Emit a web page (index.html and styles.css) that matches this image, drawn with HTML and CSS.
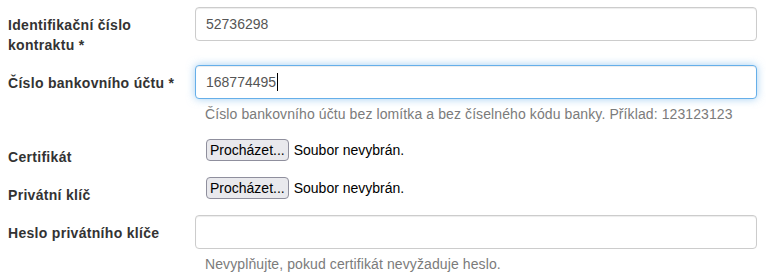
FILE: index.html
```html
<!DOCTYPE html>
<html lang="cs">
<head>
<meta charset="utf-8">
<title>Formulář</title>
<link rel="stylesheet" href="styles.css">
</head>
<body>
<form class="form">
  <div class="row">
    <label class="lbl">Identifikační číslo kontraktu *</label>
    <div class="ctl"><input class="inp" type="text" value="52736298"></div>
  </div>
  <div class="row">
    <label class="lbl">Číslo bankovního účtu *</label>
    <div class="ctl">
      <div class="field">
        <input class="inp focus" type="text" value="168774495">
        <span class="caret"></span>
      </div>
      <p class="help help-gap">Číslo bankovního účtu bez lomítka a bez číselného kódu banky. Příklad: 123123123</p>
    </div>
  </div>
  <div class="row row-file">
    <label class="lbl">Certifikát</label>
    <div class="ctl file"><span class="fbtn">Procházet...</span><span class="fname">Soubor nevybrán.</span></div>
  </div>
  <div class="row">
    <label class="lbl">Privátní klíč</label>
    <div class="ctl file"><span class="fbtn">Procházet...</span><span class="fname">Soubor nevybrán.</span></div>
  </div>
  <div class="row">
    <label class="lbl">Heslo privátního klíče</label>
    <div class="ctl">
      <input class="inp" type="password" value="">
      <p class="help">Nevyplňujte, pokud certifikát nevyžaduje heslo.</p>
    </div>
  </div>
</form>
</body>
</html>
```
FILE: styles.css
```css
html, body {
  margin: 0;
  background: #fff;
}
body {
  font-family: "Liberation Sans", Arial, sans-serif;
  font-size: 14px;
  line-height: 20px;
  color: #333;
}
.form {
  display: flex;
  flex-direction: column;
  gap: 10px;
  padding: 7px 9px 0 8px;
}
.row {
  display: grid;
  grid-template-columns: 187px 1fr;
}
.row-file {
  margin-top: 1px;
}
.lbl {
  padding: 8px 15px 0 0;
  font-weight: 700;
  letter-spacing: 0.3px;
  color: #333;
}
.field {
  position: relative;
}
.inp {
  display: block;
  width: 100%;
  height: 34px;
  box-sizing: border-box;
  margin: 0;
  padding: 6px 10px;
  font-family: "Liberation Sans", Arial, sans-serif;
  font-size: 14px;
  line-height: 20px;
  color: #555;
  background: #fff;
  border: 1px solid #ccc;
  border-radius: 4px;
  box-shadow: inset 0 1px 1px rgba(0, 0, 0, 0.075);
  outline: none;
}
.inp.focus {
  border-color: #66afe9;
  box-shadow: inset 0 1px 1px rgba(0, 0, 0, 0.075), 0 0 8px rgba(102, 175, 233, 0.6);
}
.caret {
  position: absolute;
  left: 82px;
  top: 8px;
  width: 1px;
  height: 18px;
  background: #000;
}
.help {
  margin: 5px 0 0 10px;
  letter-spacing: 0.1px;
  color: #7b7b7b;
}
.help-gap {
  margin-bottom: 4px;
}
.file {
  display: flex;
  align-items: flex-start;
  padding-left: 11px;
}
.fbtn {
  display: block;
  box-sizing: border-box;
  height: 22px;
  padding: 0 3px;
  line-height: 20px;
  color: #000;
  background: #e9e9ed;
  border: 1px solid #8f8f9d;
  border-radius: 4px;
  white-space: nowrap;
}
.fname {
  margin-left: 5px;
  line-height: 22px;
  color: #000;
}
```
